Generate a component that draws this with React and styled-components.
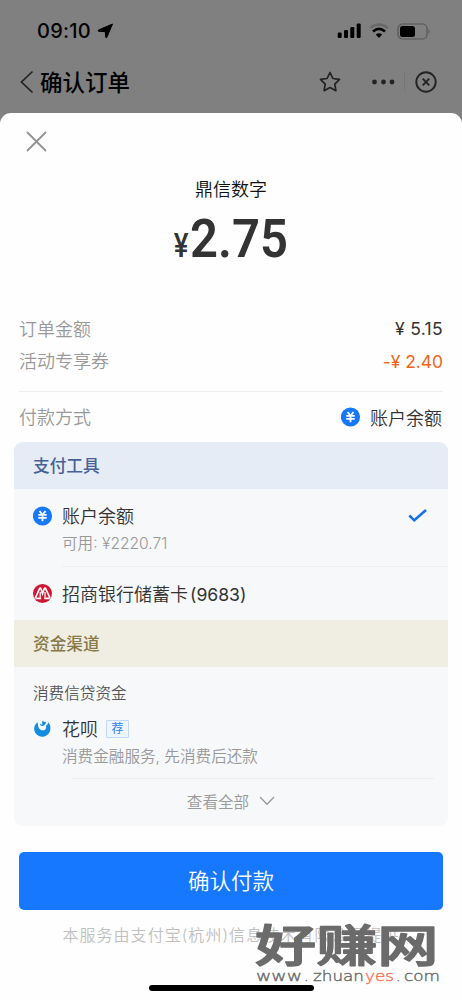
import React from "react";
import styled, { createGlobalStyle } from "styled-components";

const Global = createGlobalStyle`
  * { box-sizing: border-box; }
  body { margin: 0; background: #fefefe; }
`;

const Screen = styled.div`
  position: relative;
  width: 462px;
  height: 1000px;
  overflow: hidden;
  display: flex;
  flex-direction: column;
  background: #808080;
  color: #333;
  font-family: Inter, "Noto Sans CJK SC", sans-serif;
  font-weight: 350;
`;

const StatusBar = styled.header`
  height: 62px;
  padding: 0 31px 0 37px;
  display: flex;
  align-items: center;
  justify-content: space-between;
  color: #000;
`;

const Cluster = styled.div`
  display: flex;
  align-items: center;
  gap: ${(p) => p.$gap || 0}px;
`;

const Clock = styled.span`
  font-size: 20px;
  font-weight: 500;
  letter-spacing: 0.25px;
`;

const NavBar = styled.nav`
  height: 50.5px;
  padding: 0 25px 10px 20px;
  display: flex;
  align-items: center;
  justify-content: space-between;
  color: #222;
`;

const NavTitle = styled.h1`
  margin: 0 0 2px;
  font: 500 22.5px/32px "Noto Sans CJK SC", sans-serif;
  color: #000;
`;

const NavDivider = styled.i`
  width: 1px;
  height: 20px;
  margin: 0 10px 0 9px;
  background: #777;
`;

const Sheet = styled.main`
  flex: 1;
  display: flex;
  flex-direction: column;
  background: #fefefe;
  border-radius: 11px 11px 0 0;
`;

const CloseRow = styled.div`
  height: 58px;
  padding: 0 26px;
  display: flex;
  align-items: center;
`;

const Merchant = styled.div`
  height: 36px;
  text-align: center;
  font-size: 18px;
  line-height: 37px;
  color: #111;
`;

const Amount = styled.div`
  height: 105.5px;
  padding: 1px 3px 0 0;
  display: flex;
  justify-content: center;
  align-items: baseline;
  font-family: Roboto, sans-serif;
  font-weight: 600;
  font-size: 53px;
  line-height: 62px;
`;

const Figure = styled.span`
  width: 98px;
  transform: scaleX(0.925);
  transform-origin: left;
`;

const Currency = styled.span`
  margin-right: 1px;
  font-size: 33px;
  font-weight: 500;
  transform: scaleX(0.84);
  transform-origin: right;
`;

const Line = styled.div`
  height: ${(p) => p.$h}px;
  margin: 0 19px;
  display: flex;
  justify-content: space-between;
  align-items: center;
  font-size: 18px;
`;

const Label = styled.span`
  margin-bottom: 2px;
  color: #999;
`;

const Source = styled(Cluster)`
  margin-right: 1px;
  padding-bottom: 1px;
`;

const Value = styled.span`
  font-size: 17.5px;
  font-weight: 400;
  letter-spacing: ${(p) => (p.$discount ? -0.05 : 0.35)}px;
  color: ${(p) => (p.$discount ? "#f26419" : "#333")};
`;

const Rule = styled.div`
  flex: none;
  height: 1px;
  margin: 0 ${(p) => p.$right}px 0 ${(p) => p.$left}px;
  background: #eceef0;
`;

const Panel = styled.section`
  height: 384px;
  margin: 0 14px;
  display: flex;
  flex-direction: column;
  border-radius: 9px;
  overflow: hidden;
  background: #f6f8fa;
`;

const Band = styled.h2`
  flex: none;
  height: 47px;
  margin: 0;
  padding-left: 19px;
  font-size: 16.7px;
  font-weight: 500;
  line-height: 48px;
  color: ${(p) => (p.$warm ? "#857947" : "#466295")};
  background: ${(p) => (p.$warm ? "#f0ede2" : "#e6ecf5")};
`;

const Method = styled.div`
  height: ${(p) => p.$h}px;
  padding: ${(p) => p.$top}px 20px 0 19px;
  display: grid;
  grid-template-columns: 20px 1fr 20px;
  grid-template-rows: 30px 25px;
  column-gap: 9px;
  align-items: center;
`;

const Name = styled.span`
  display: flex;
  align-items: center;
  gap: 8px;
  padding-top: 1px;
  font-size: 18px;
  line-height: 30px;
  white-space: nowrap;
`;

const Digits = styled.span`
  margin-left: -6px;
  font-size: 17.6px;
  font-weight: 400;
`;

const Note = styled.span`
  grid-column: 2;
  font-size: 15.6px;
  line-height: 26px;
  color: #999;
  white-space: nowrap;
`;

const Tag = styled.b`
  width: 23px;
  height: 18px;
  margin-bottom: 1px;
  border: 1px solid #c0d9f6;
  border-radius: 1px;
  background: #edf5fe;
  color: #3183ec;
  font-size: 12px;
  font-weight: 400;
  line-height: 16px;
  text-align: center;
`;

const Subheading = styled.h3`
  flex: none;
  height: 46px;
  margin: 0;
  padding: 3px 19px 0;
  font-size: 15.6px;
  font-weight: 350;
  line-height: 47px;
  color: #555;
`;

const More = styled.div`
  height: 46px;
  padding: 0 0 2px;
  display: flex;
  align-items: center;
  justify-content: center;
  gap: 10px;
  font-size: 15.6px;
  color: #999;
`;

const PayButton = styled.button`
  height: 58px;
  margin: 26px 19px 0;
  padding: 0 0 2px;
  border: 0;
  border-radius: 5px;
  background: #1677ff;
  color: #fff;
  font: 350 21.5px/56px "Noto Sans CJK SC", sans-serif;
`;

const Provider = styled.footer`
  height: 50px;
  text-align: center;
  font-size: 16px;
  letter-spacing: 1.05px;
  line-height: 51px;
  color: #c0c0c0;
  white-space: nowrap;
`;

const HomeBar = styled.div`
  width: 165px;
  height: 6px;
  margin: 24.5px auto 0 149px;
  border-radius: 3px;
  background: #000;
`;

const Watermark = styled.svg`
  position: absolute;
  left: 250px;
  top: 915px;
`;

const Location = () => (
  <svg width="17" height="16" viewBox="0 0 17 16">
    <path d="M15.500 1 9.800 14.500Q9 15.400 8.700 14L8.300 8.700 1.800 8.300Q.4 8 1.500 7Z" fill="#000" stroke="#000" strokeLinejoin="round" />
  </svg>
);

const Signal = () => (
  <svg width="24" height="16" viewBox="0 0 24 16">
    <rect x="0.700" y="9.500" width="4" height="5.500" rx="1.200" />
    <rect x="7" y="7" width="4" height="8" rx="1.200" />
    <rect x="13.300" y="4" width="4" height="11" rx="1.200" />
    <rect x="19.700" y="0.500" width="4" height="14.500" rx="1.200" />
  </svg>
);

const Wifi = () => (
  <svg width="20" height="16" viewBox="0 0 20 16" fill="none" strokeWidth="2.200">
    <path d="M1 5Q10-2 19 5" stroke="#686868" />
    <path d="M4 8.500Q10 3.300 16 8.500" stroke="#000" strokeWidth="2.800" />
    <path d="m10 15-3.200-3.400Q10 9 13.200 11.600Z" fill="#000" />
  </svg>
);

const Battery = () => (
  <svg width="34" height="17" viewBox="0 0 34 17">
    <rect x="1" y="1" width="29" height="15" rx="4.500" fill="none" stroke="#555" strokeWidth="1.200" />
    <rect x="3" y="3" width="15" height="11" rx="2.500" />
    <path d="M31.500 6v5q2-2.500 0-5" fill="#555" />
  </svg>
);

const Coin = () => (
  <svg width="20" height="20" viewBox="0 0 20 20">
    <circle cx="9.500" cy="10" r="9.600" fill="#1677ff" />
    <path d="m6.500 5 3 3.700 3-3.700M5.300 8.900h8.400M5.300 11.900h8.400M9.500 8.700v6.500" fill="none" stroke="#fff" strokeWidth="1.800" />
  </svg>
);

const BankLogo = () => (
  <svg width="20" height="20" viewBox="0 0 20 20">
    <circle cx="9.500" cy="9.500" r="9.500" fill="#cf1732" />
    <path d="M2.300 14 6.500 4.800Q7.300 3.300 8 4.800L9.500 9.500 11.200 4.800Q12 3.300 12.700 4.800L17 14" fill="none" stroke="#fff" strokeWidth="1.700" />
    <path d="M7.200 8v5.700M12 8v5.700" stroke="#fff" strokeWidth="1.200" />
    <path d="M2.500 14.300h5.600M11.200 14.300h5.600" stroke="#fff" strokeWidth="1.700" />
  </svg>
);

const HuabeiLogo = () => (
  <svg width="20" height="20" viewBox="0 0 20 20">
    <path d="M4.800 3.200C.6 5.900.1 11 3 14.700c3.600 4.500 10.700 3.900 13.400-1.100 2-3.700 1-8.100-1.200-10.300-.1 1.500-.8 2.700-2.300 3.400.7 2.300-.2 4-2.200 4.500-2.300.5-4.300-.7-5.200-3-.6-1.700-.9-3.400-.7-5Z" fill="#168ce0" />
    <path d="M7 4.200c.3 1.100 1.500 1.600 2.700 1.200-.9-1.200-.9-2.600.1-4 .7 1.400 2 1.900 3.200 1.200.1 2.700-1.300 4.100-3.400 4.300-1.700.4-2.900-.9-2.600-2.700Z" fill="#168ce0" />
  </svg>
);

export default function App() {
  return (
    <Screen>
      <Global />
      <StatusBar>
        <Cluster $gap={6}>
          <Clock>09:10</Clock>
          <Location />
        </Cluster>
        <Cluster $gap={8}>
          <Signal />
          <Wifi />
          <Battery />
        </Cluster>
      </StatusBar>
      <NavBar>
        <Cluster $gap={6}>
          <svg width="14" height="24" viewBox="0 0 14 24" fill="none" stroke="#222" strokeWidth="1.700">
            <path d="M12.500 1.500 1.500 12l11 10.500" />
          </svg>
          <NavTitle>确认订单</NavTitle>
        </Cluster>
        <Cluster>
          <svg width="22" height="22" viewBox="0 0 22 22" fill="none" stroke="#222" strokeWidth="1.700" strokeLinejoin="round">
            <path d="m11 1.500 2.900 6 6.600.9-4.700 4.700 1.100 6.600-5.900-3.100-5.900 3.100 1.100-6.600L1.500 8.400l6.600-.9Z" />
          </svg>
          <svg width="54" height="22" viewBox="0 0 54 22" fill="#222">
            <circle cx="33.500" cy="11" r="2.400" />
            <circle cx="42.500" cy="11" r="2.400" />
            <circle cx="51" cy="11" r="2.400" />
          </svg>
          <NavDivider />
          <svg width="22" height="22" viewBox="0 0 22 22" fill="none" stroke="#222" strokeWidth="1.900">
            <circle cx="11" cy="11" r="9.700" />
            <path d="m7.700 7.700 6.600 6.600m0-6.600-6.600 6.600" />
          </svg>
        </Cluster>
      </NavBar>

      <Sheet>
        <CloseRow>
          <svg width="21" height="21" viewBox="0 0 21 21" stroke="#929292" strokeWidth="1.800" strokeLinecap="round">
            <path d="m1.500 1.500 18 18m0-18-18 18" />
          </svg>
        </CloseRow>
        <Merchant>鼎信数字</Merchant>
        <Amount>
          <Currency>¥</Currency>
          <Figure>2.75</Figure>
        </Amount>
        <Line $h={33}>
          <Label>订单金额</Label>
          <Value>¥ 5.15</Value>
        </Line>
        <Line $h={32}>
          <Label>活动专享券</Label>
          <Value $discount>-¥ 2.40</Value>
        </Line>
        <Line $h={14} />
        <Rule $left={19} $right={19} />
        <Line $h={50}>
          <Label>付款方式</Label>
          <Source $gap={9}>
            <Coin />
            <span>账户余额</span>
          </Source>
        </Line>

        <Panel>
          <Band>支付工具</Band>
          <Method $h={77} $top={12}>
            <Coin />
            <Name>账户余额</Name>
            <svg width="20" height="16" viewBox="0 0 20 16" fill="none" stroke="#1671e8" strokeWidth="2.500">
              <path d="m1.300 7.500 5 4.800L18 2" />
            </svg>
            <Note>可用: ¥2220.71</Note>
          </Method>
          <Rule $left={48} $right={0} />
          <Method $h={53} $top={12}>
            <BankLogo />
            <Name>
              招商银行储蓄卡<Digits>(9683)</Digits>
            </Name>
          </Method>
          <Band $warm>资金渠道</Band>
          <Subheading>消费信贷资金</Subheading>
          <Method $h={65} $top={1}>
            <HuabeiLogo />
            <Name>
              花呗<Tag>荐</Tag>
            </Name>
            <i />
            <Note>消费金融服务, 先消费后还款</Note>
          </Method>
          <Rule $left={58} $right={14} />
          <More>
            查看全部
            <svg width="16" height="10" viewBox="0 0 16 10" fill="none" stroke="#999" strokeWidth="1.300">
              <path d="m1 1 7 7.300L15 1" />
            </svg>
          </More>
        </Panel>
        <PayButton>确认付款</PayButton>
        <Provider>本服务由支付宝(杭州)信息技术有限公司提供</Provider>
        <HomeBar />
      </Sheet>

      <Watermark width="212" height="85" viewBox="0 0 212 85" fill="#6b6b6b">
        <text
          transform="translate(5 46.500) scale(1.330 0.970)"
          fontFamily="Noto Sans CJK SC, sans-serif"
          fontWeight="500"
          fontSize="46"
          stroke="#6b6b6b"
          strokeWidth="1.500"
          strokeLinejoin="round"
        >
          好赚网
        </text>
        <g fontFamily="DejaVu Sans, sans-serif" fontSize="14.500" stroke="#6b6b6b" strokeWidth="0.400">
          <text x="6" y="66" textLength="46" lengthAdjust="spacingAndGlyphs">www</text>
          <text x="54" y="66">.</text>
          <text x="63" y="66" textLength="51" lengthAdjust="spacingAndGlyphs">zhuan</text>
          <text x="115" y="66" textLength="29" lengthAdjust="spacingAndGlyphs" fill="#ff7354" stroke="#ff7354">yes</text>
          <text x="146" y="66">.</text>
          <text x="154" y="66" textLength="36" lengthAdjust="spacingAndGlyphs">com</text>
        </g>
      </Watermark>
    </Screen>
  );
}
